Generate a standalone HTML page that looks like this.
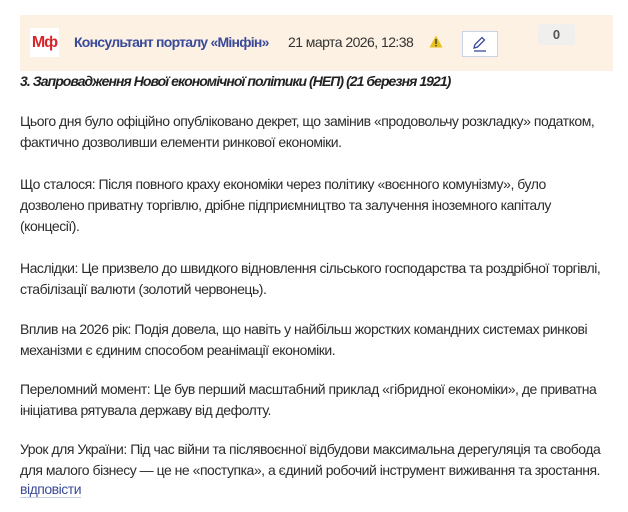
<!DOCTYPE html>
<html><head><meta charset="utf-8"><style>
body{margin:0;background:#fff;width:628px;height:512px;overflow:hidden;font-family:"Liberation Sans",sans-serif;color:#2b2b2b}
.hd{position:absolute;left:20px;top:15px;width:593px;height:56px;background:#fcf1e2}
.logo{position:absolute;left:30px;top:28px;width:29px;height:29px;background:#fff;color:#d8262c;font-weight:bold;font-size:16px;line-height:29px;text-align:center;letter-spacing:-1px}
.name{position:absolute;left:74px;top:34px;color:#3a4a9a;font-weight:bold;font-size:14px;letter-spacing:-0.75px}
.date{position:absolute;left:288px;top:34px;font-size:14px;color:#333;letter-spacing:-0.55px}
.warn{position:absolute;left:429px;top:35px}
.edit{position:absolute;left:462px;top:31px;width:36px;height:26px;border:1px solid #c9d3e8;background:#fff;box-sizing:border-box}
.zero{position:absolute;left:538px;top:24px;width:37px;height:21px;background:#f0efee;border-radius:3px;text-align:center;font-size:13px;font-weight:bold;line-height:21px;color:#555}
.t{position:absolute;left:20px;font-size:14px;line-height:21px;white-space:nowrap;letter-spacing:-0.48px}
.h{position:absolute;left:20px;top:71px;font-size:14px;font-weight:bold;font-style:italic;line-height:21px;letter-spacing:-0.95px;color:#222}
a{color:#3a4a9a;text-decoration:none;border-bottom:1px solid #c7cdea}
</style></head><body>
<div class="hd"></div>
<div class="logo">Мф</div>
<div class="name">Консультант порталу «Мінфін»</div>
<div class="date">21 марта 2026, 12:38</div>
<svg class="warn" width="14" height="13" viewBox="0 0 14 13"><path d="M7 0.5L13.5 12.5H0.5Z" fill="#e8c21c"/><rect x="6.3" y="4" width="1.4" height="5" fill="#333"/><rect x="6.3" y="10" width="1.4" height="1.4" fill="#333"/></svg>
<div class="edit"><svg width="36" height="26" viewBox="0 0 36 26" style="position:absolute;left:-1px;top:-1px"><path d="M12 17l1-3.5 7-7 2.5 2.5-7 7z" fill="none" stroke="#3a4a9a" stroke-width="1.3"/><path d="M12 20h12" stroke="#3a4a9a" stroke-width="1.3"/></svg></div>
<div class="zero">0</div>
<div class="h">3. Запровадження Нової економічної політики (НЕП) (21 березня 1921)</div>
<div class="t" style="top:111px">Цього дня було офіційно опубліковано декрет, що замінив «продовольчу розкладку» податком,<br>фактично дозволивши елементи ринкової економіки.</div>
<div class="t" style="top:174px">Що сталося: Після повного краху економіки через політику «воєнного комунізму», було<br>дозволено приватну торгівлю, дрібне підприємництво та залучення іноземного капіталу<br>(концесії).</div>
<div class="t" style="top:258px">Наслідки: Це призвело до швидкого відновлення сільського господарства та роздрібної торгівлі,<br>стабілізації валюти (золотий червонець).</div>
<div class="t" style="top:319px">Вплив на 2026 рік: Подія довела, що навіть у найбільш жорстких командних системах ринкові<br>механізми є єдиним способом реанімації економіки.</div>
<div class="t" style="top:379px">Переломний момент: Це був перший масштабний приклад «гібридної економіки», де приватна<br>ініціатива рятувала державу від дефолту.</div>
<div class="t" style="top:439px">Урок для України: Під час війни та післявоєнної відбудови максимальна дерегуляція та свобода<br>для малого бізнесу — це не «поступка», а єдиний робочий інструмент виживання та зростання.</div>
<div class="t" style="top:479px"><a>відповісти</a></div>
</body></html>
